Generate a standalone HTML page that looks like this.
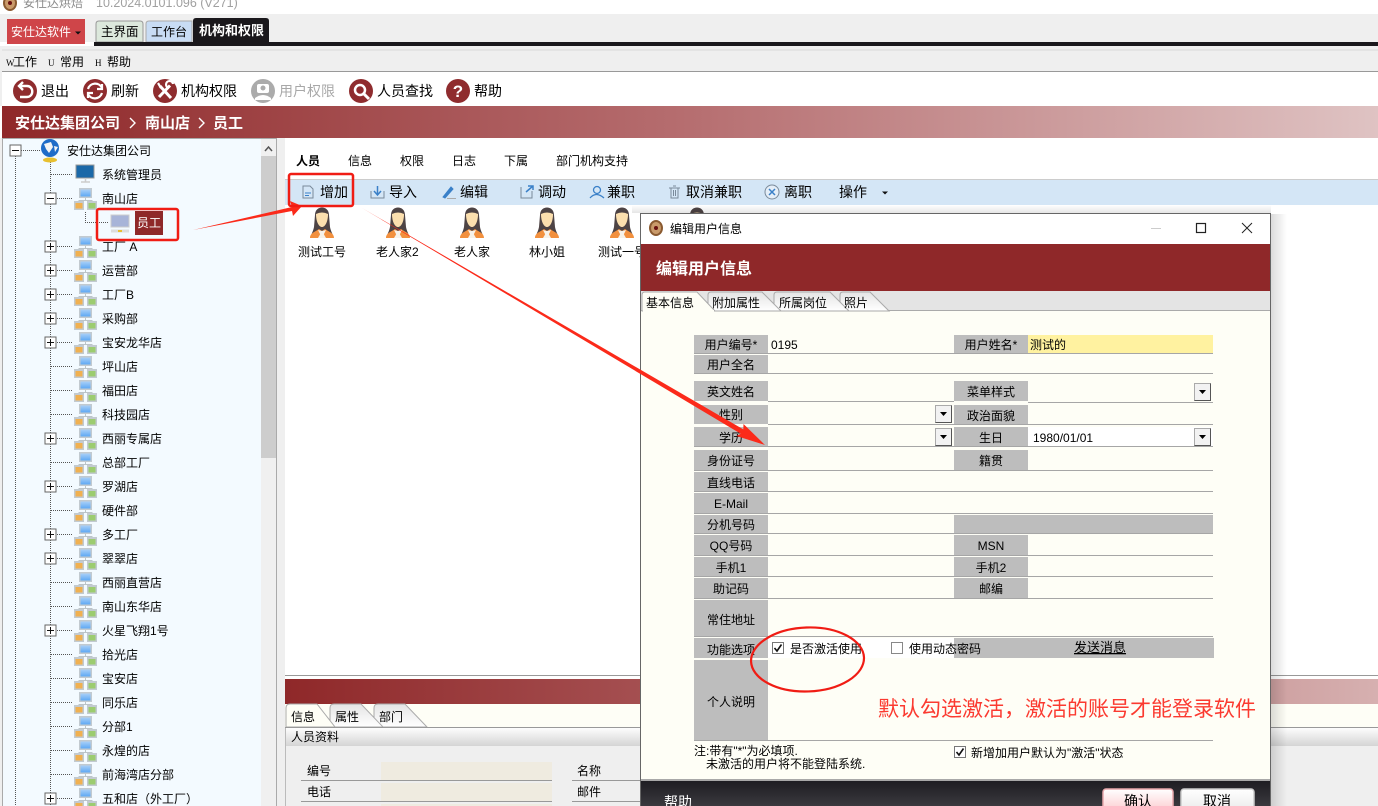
<!DOCTYPE html>
<html><head><meta charset="utf-8"><style>
html,body{margin:0;padding:0;width:1378px;height:806px;overflow:hidden;background:#fff}
svg{display:block}
text{font-family:"Liberation Sans","Noto Sans CJK SC",sans-serif;font-size:12px;fill:#000}
.t14 text,text.t14{font-size:14px}
.l text,text.l{text-anchor:middle}
</style></head><body>
<svg xmlns="http://www.w3.org/2000/svg" width="1378" height="806" viewBox="0 0 1378 806">
<defs>
<linearGradient id="rb"><stop offset="0" stop-color="#8f2829"/><stop offset=".5" stop-color="#b66e70"/><stop offset="1" stop-color="#dfc3c3"/></linearGradient>
<linearGradient id="rb2"><stop offset="0" stop-color="#8f2829"/><stop offset=".5" stop-color="#b06466"/><stop offset="1" stop-color="#d6b0b0"/></linearGradient>
<linearGradient id="bar" x2="0" y2="1"><stop offset="0" stop-color="#fdfdfd"/><stop offset="1" stop-color="#d4d4d4"/></linearGradient>
<linearGradient id="tabg" x2="0" y2="1"><stop offset="0" stop-color="#e4e4e4"/><stop offset="1" stop-color="#fff"/></linearGradient>
<linearGradient id="ok" x2="0" y2="1"><stop offset="0" stop-color="#fff"/><stop offset="1" stop-color="#fcc8cc"/></linearGradient>
<linearGradient id="no" x2="0" y2="1"><stop offset="0" stop-color="#fff"/><stop offset="1" stop-color="#e8e8e8"/></linearGradient>
<linearGradient id="foot" x2="0" y2="1"><stop offset="0" stop-color="#1e1d22"/><stop offset="1" stop-color="#3a393e"/></linearGradient>
<linearGradient id="shad"><stop offset="0" stop-color="#000" stop-opacity=".14"/><stop offset="1" stop-color="#000" stop-opacity="0"/></linearGradient>
<linearGradient id="shadt" x2="0" y2="1"><stop offset="0" stop-color="#000" stop-opacity="0"/><stop offset="1" stop-color="#000" stop-opacity=".1"/></linearGradient>
<linearGradient id="sky" x2="0" y2="1"><stop offset="0" stop-color="#a8d0f8"/><stop offset="1" stop-color="#5ea8f4"/></linearGradient>
<g id="org">
<rect x="-6" y="-10" width="13" height="10" fill="#c2cad0"/>
<rect x="-4.500" y="-8.500" width="10" height="7" fill="url(#sky)"/>
<path d="M.5 0V3M-6 4V2.500H7V4" fill="none" stroke="#bcc4c8"/>
<rect x="-11" y="3" width="10" height="9" fill="#c2cad0"/>
<rect x="-9.500" y="5" width="7" height="5.500" fill="#f0b050"/>
<rect x="2" y="3" width="10" height="9" fill="#c2cad0"/>
<rect x="3.500" y="5" width="7" height="5.500" fill="#9ccc70"/>
</g>
<g id="plus"><rect x="-5.5" y="-5.5" width="11" height="11" fill="#fff" stroke="#666"/><path d="M-3.5 0H3.5M0-3.5V3.5" stroke="#111"/></g>
<g id="minus"><rect x="-5.5" y="-5.5" width="11" height="11" fill="#fff" stroke="#666"/><path d="M-3.5 0H3.5" stroke="#111"/></g>
<g id="p">
<path d="M-7-7C-7-17 7-17 7-7L8 5C9 10 11 12 11 15H-11C-11 12-9 10-8 5Z" fill="#4d4344"/>
<path d="M-6-8Q0-11 6-8C6 0 3 5 0 5S-6 0-6-8Z" fill="#fbdfae"/>
<path d="M-12 16C-12 11-7 10-3 7L0 9L3 7C7 10 12 11 12 16Z" fill="#f2903e"/>
<path d="M-4 8L0 16L4 8L0 9Z" fill="#f6f2ea"/>
<path d="M-4 16H4L0 9Z" fill="#f6f2ea"/>
</g>
<g id="dd"><rect x="0" y="0" width="16" height="17" fill="#f2f2f2" stroke="#aaa"/><path d="M16 0V17H0" fill="none" stroke="#555"/><path d="M4.5 6.500H11.500L8 10.500Z" fill="#000"/></g>
<g id="cb"><rect x=".5" y=".5" width="11" height="11" fill="#fff" stroke="#777"/><path d="M2.500 6L5 9L9.500 2.500" fill="none" stroke="#111" stroke-width="1.600"/></g>
<g id="donut"><ellipse cx="0" cy="0" rx="7" ry="8" fill="#8a5a30"/><ellipse cx="0" cy="0" rx="5" ry="6" fill="#c99a6a"/><circle r="2" fill="#6a1010"/></g>
</defs>

<!-- title -->
<rect width="1378" height="14" fill="#fff"/>
<use href="#donut" x="10" y="3"/>
<text x="23" y="7" style="fill:#8a8a8a">安仕达烘焙</text>
<text x="96" y="7" style="fill:#a0a0a0;font-size:12.500px">10.2024.0101.096 (V271)</text>

<!-- tab band -->
<rect y="14" width="1378" height="28" fill="#efefef"/>
<rect x="7" y="19" width="78" height="25" fill="#cf4549"/>
<text x="11" y="36" style="fill:#fff;font-size:12px">安仕达软件</text>
<path d="M75 31.500H81L78 34.500Z" fill="#111"/>
<path d="M96 42V24Q96 21 99 21H140Q143 21 143 24V42Z" fill="#dce8dc" stroke="#999"/>
<path d="M146 42V24Q146 21 149 21H192V42Z" fill="#c8dcf4" stroke="#aaa"/>
<path d="M193 42V21Q193 18 196 18H266Q269 18 269 21V42Z" fill="#1a181c"/>
<text x="101" y="36" style="font-size:12.500px">主界面</text>
<text x="151" y="36" style="font-size:12px">工作台</text>
<text x="199" y="35" style="fill:#fff;font-size:13px;font-weight:700">机构和权限</text>
<rect x="94" y="42" width="1284" height="4" fill="#1a181c"/>
<rect y="46" width="1378" height="3" fill="#efefef"/>
<rect y="49" width="1378" height="2" fill="#e4e4e4"/>

<!-- menu -->
<rect y="51" width="1378" height="20" fill="#efefef"/>
<rect y="71" width="1378" height="1" fill="#999"/>
<rect y="49" width="2" height="57" fill="#efefef"/>
<text x="6" y="66" style="font-family:'Liberation Serif',serif;font-size:9px">W</text><text x="13" y="66">工作</text>
<text x="48" y="66" style="font-family:'Liberation Serif',serif;font-size:9px">U</text><text x="60" y="66">常用</text>
<text x="95" y="66" style="font-family:'Liberation Serif',serif;font-size:9px">H</text><text x="107" y="66">帮助</text>

<!-- toolbar -->
<g fill="#8f2c2e">
<circle cx="25" cy="91" r="12"/><circle cx="95" cy="91" r="12"/><circle cx="165" cy="91" r="12"/><circle cx="361" cy="91" r="12"/><circle cx="458" cy="91" r="12"/>
</g>
<circle cx="263" cy="91" r="12" fill="#ababab"/>
<path d="M20 86H27C34 86 34 97 27 97H20M23 82L19 86L23 90" fill="none" stroke="#fff" stroke-width="2.400"/>
<path d="M88 89A7.500 7.500 0 0 1 102 88M102 93A7.500 7.500 0 0 1 88 94M102 84V89H97M88 98V93H93" fill="none" stroke="#fff" stroke-width="2.200"/>
<path d="M160 86L171 98M170 85.500L159 97" stroke="#fff" stroke-width="3"/><path d="M158 83L161 88M169 88A3.500 3.500 0 1 1 173 84" fill="none" stroke="#fff" stroke-width="2.200"/>
<rect x="257" y="84" width="12" height="9" rx="2" fill="#fff"/><circle cx="263" cy="88" r="2.500" fill="#ababab"/><path d="M255 98Q263 92 271 98V100H255Z" fill="#fff"/>
<circle cx="360" cy="90" r="5" fill="none" stroke="#fff" stroke-width="2.500"/><path d="M364 94L369 99" stroke="#fff" stroke-width="3"/>
<text x="458" y="97" text-anchor="middle" style="fill:#fff;font-size:17px;font-weight:700">?</text>
<g class="t14">
<text x="41" y="96">退出</text><text x="111" y="96">刷新</text><text x="181" y="96">机构权限</text>
<text x="279" y="96" style="fill:#a8a8a8">用户权限</text><text x="377" y="96">人员查找</text><text x="474" y="96">帮助</text>
</g>

<!-- breadcrumb -->
<rect x="2" y="106" width="1376" height="32" fill="url(#rb)"/>
<text x="15" y="128" style="fill:#fff;font-size:15px;font-weight:700">安仕达集团公司</text>
<path d="M130 118L135 123L130 128M199 118L204 123L199 128" fill="none" stroke="#fff" stroke-width="1.400"/>
<text x="145" y="128" style="fill:#fff;font-size:15px;font-weight:700">南山店</text>
<text x="213" y="128" style="fill:#fff;font-size:15px;font-weight:700">员工</text>

<!-- tree -->
<rect y="138" width="285" height="668" fill="#efefef"/>
<rect x="3" y="139" width="258" height="667" fill="#f3faff"/>
<rect x="2" y="138" width="275" height="1" fill="#aaa"/><rect x="2" y="138" width="1" height="668" fill="#aaa"/><rect x="276" y="138" width="1" height="668" fill="#aaa"/>
<rect x="261" y="139" width="15" height="667" fill="#f0f0f0"/>
<rect x="261" y="156" width="15" height="302" fill="#cdcdcd"/>
<path d="M265 151L268.500 147L272 151" fill="none" stroke="#555" stroke-width="1.500"/>
<g stroke="#555" stroke-dasharray="1 1" fill="none">
<path d="M15.500 156V806M50.500 160V806M21 150.500H40"/>
<path d="M51 174.500H73M57 198.500H72M57 246.500H72M57 270.500H72M57 294.500H72M57 318.500H72M57 342.500H72M51 366.500H72M51 390.500H72M51 414.500H72M57 438.500H72M51 462.500H72M57 486.500H72M51 510.500H72M57 534.500H72M57 558.500H72M51 582.500H72M51 606.500H72M57 630.500H72M51 654.500H72M51 678.500H72M51 702.500H72M51 726.500H72M51 750.500H72M51 774.500H72M57 798.500H72"/>
<path d="M85.500 212V222.500H108"/>
</g>
<use href="#minus" x="15.500" y="150.500"/>
<use href="#minus" x="50.500" y="198.500"/>
<use href="#plus" x="50.500" y="246.500"/><use href="#plus" x="50.500" y="270.500"/><use href="#plus" x="50.500" y="294.500"/><use href="#plus" x="50.500" y="318.500"/><use href="#plus" x="50.500" y="342.500"/><use href="#plus" x="50.500" y="438.500"/><use href="#plus" x="50.500" y="486.500"/><use href="#plus" x="50.500" y="534.500"/><use href="#plus" x="50.500" y="558.500"/><use href="#plus" x="50.500" y="630.500"/><use href="#plus" x="50.500" y="798.500"/>
<circle cx="50" cy="148" r="9" fill="#1f6cc8"/><path d="M44 144L51 142L53 147L49 153L46 149ZM54 146L58 147L55 152Z" fill="#f4f4f4"/><ellipse cx="50" cy="160" rx="7" ry="2.500" fill="#e8c030"/>
<rect x="76" y="165" width="18" height="13" fill="#1a68a8" stroke="#999"/><path d="M81 182H90M85.500 178V182" stroke="#ccc" stroke-width="1.500"/>
<use href="#org" x="85" y="198"/><use href="#org" x="85" y="246"/><use href="#org" x="85" y="270"/><use href="#org" x="85" y="294"/><use href="#org" x="85" y="318"/><use href="#org" x="85" y="342"/><use href="#org" x="85" y="366"/><use href="#org" x="85" y="390"/><use href="#org" x="85" y="414"/><use href="#org" x="85" y="438"/><use href="#org" x="85" y="462"/><use href="#org" x="85" y="486"/><use href="#org" x="85" y="510"/><use href="#org" x="85" y="534"/><use href="#org" x="85" y="558"/><use href="#org" x="85" y="582"/><use href="#org" x="85" y="606"/><use href="#org" x="85" y="630"/><use href="#org" x="85" y="654"/><use href="#org" x="85" y="678"/><use href="#org" x="85" y="702"/><use href="#org" x="85" y="726"/><use href="#org" x="85" y="750"/><use href="#org" x="85" y="774"/><use href="#org" x="85" y="798"/>
<rect x="111" y="215" width="18" height="12" fill="#a8b4d8" stroke="#ccc"/><path d="M111 231H129" stroke="#ddd" stroke-width="3"/><rect x="118" y="230" width="4" height="2" fill="#e8c030"/>
<rect x="135" y="211" width="28" height="24" fill="#8f2829"/>
<text x="137" y="227" style="fill:#fff;font-size:12px">员工</text>
<g>
<text x="67" y="155">安仕达集团公司</text><text x="102" y="179">系统管理员</text><text x="102" y="203">南山店</text>
<text x="102" y="251">工厂 A</text><text x="102" y="275">运营部</text><text x="102" y="299">工厂B</text><text x="102" y="323">采购部</text><text x="102" y="347">宝安龙华店</text><text x="102" y="371">坪山店</text><text x="102" y="395">福田店</text><text x="102" y="419">科技园店</text><text x="102" y="443">西丽专属店</text><text x="102" y="467">总部工厂</text><text x="102" y="491">罗湖店</text><text x="102" y="515">硬件部</text><text x="102" y="539">多工厂</text><text x="102" y="563">翠翠店</text><text x="102" y="587">西丽直营店</text><text x="102" y="611">南山东华店</text><text x="102" y="635">火星飞翔1号</text><text x="102" y="659">拾光店</text><text x="102" y="683">宝安店</text><text x="102" y="707">同乐店</text><text x="102" y="731">分部1</text><text x="102" y="755">永煌的店</text><text x="102" y="779">前海湾店分部</text><text x="102" y="803">五和店（外工厂）</text>
</g>

<!-- right content -->
<rect x="285" y="138" width="1093" height="537" fill="#fff"/>
<text x="296" y="165" style="font-weight:700">人员</text><text x="348" y="165">信息</text><text x="400" y="165">权限</text><text x="452" y="165">日志</text><text x="504" y="165">下属</text><text x="556" y="165">部门机构支持</text>
<rect x="285" y="179" width="1093" height="1" fill="#ccc"/>
<rect x="285" y="180" width="1093" height="25" fill="#d4e6f6"/>
<g fill="none" stroke="#7a8a9a">
<path d="M303 186H310L313 189V198H303Z"/><path d="M305 193H311M305 195.500H309" stroke="#3a80c8"/>
<path d="M371 191V198H384V191"/><path d="M377.500 186V194M374 191L377.500 195L381 191" stroke="#3a80c8" stroke-width="1.500"/>
<path d="M443 197L451 187L453 189L445 198Z" fill="#3a80c8" stroke="#3a80c8"/><path d="M447 198.500H456" stroke="#aaa"/>
<path d="M521 187V198H532V191"/><path d="M526 192L533 186M528 186H533V190" stroke="#3a80c8" stroke-width="1.500"/>
<circle cx="597" cy="190" r="3.500" stroke="#3a80c8" stroke-width="1.300"/><path d="M590 198Q596 191 604 198" stroke="#3a80c8" stroke-width="1.300"/>
<path d="M669 188H680M671 188V198H678V188M673 186H676M673.500 190V196M675.500 190V196"/>
<circle cx="772" cy="192" r="7" fill="#e4eef8"/><path d="M769 189L775 195M775 189L769 195" stroke="#3a80c8" stroke-width="1.500"/>
</g>
<g class="t14">
<text x="320" y="197">增加</text><text x="389" y="197">导入</text><text x="460" y="197">编辑</text><text x="538" y="197">调动</text><text x="607" y="197">兼职</text><text x="686" y="197">取消兼职</text><text x="784" y="197">离职</text><text x="839" y="197">操作</text>
</g>
<path d="M882 191.500H888L885 194.500Z" fill="#111"/>
<use href="#p" x="322" y="222"/><use href="#p" x="398" y="222"/><use href="#p" x="472" y="222"/><use href="#p" x="547" y="222"/><use href="#p" x="622" y="222"/><use href="#p" x="697" y="222"/>
<text x="298" y="256">测试工号</text><text x="376" y="256">老人家2</text><text x="454" y="256">老人家</text><text x="529" y="256">林小姐</text><text x="598" y="256">测试一号</text>

<!-- bottom panel -->
<rect x="285" y="675" width="1093" height="1" fill="#999"/>
<rect x="285" y="676" width="1093" height="3" fill="#fff"/>
<rect x="285" y="679" width="1093" height="25" fill="url(#rb2)"/>
<rect x="285" y="704" width="1093" height="23" fill="#fefef6"/>
<path d="M374 727V708Q374 704 378 704H405L427 727H388Z" fill="url(#tabg)" stroke="#aaa"/>
<path d="M330 727V708Q330 704 334 704H361L383 727H344Z" fill="url(#tabg)" stroke="#aaa"/>
<path d="M286 727V708Q286 704 290 704H317L335 727Z" fill="#fefef6" stroke="#aaa"/>
<text x="291" y="721">信息</text><text x="335" y="721">属性</text><text x="379" y="721">部门</text>
<rect x="285" y="727" width="1093" height="1" fill="#999"/>
<rect x="286" y="728" width="1092" height="18" fill="url(#bar)"/>
<rect x="286" y="746" width="1092" height="60" fill="#efefef"/>
<rect x="285" y="728" width="1" height="78" fill="#bbb"/>
<text x="291" y="741">人员资料</text>
<rect x="381" y="762" width="171" height="18" fill="#efebe0"/><rect x="381" y="783" width="171" height="18" fill="#efebe0"/><rect x="381" y="804" width="171" height="2" fill="#efebe0"/>
<rect x="301" y="780" width="251" height="1" fill="#999"/><rect x="301" y="801" width="251" height="1" fill="#999"/>
<rect x="572" y="780" width="69" height="1" fill="#999"/><rect x="572" y="801" width="69" height="1" fill="#999"/>
<text x="307" y="775">编号</text><text x="307" y="796">电话</text><text x="577" y="775">名称</text><text x="577" y="796">邮件</text>

<!-- first arrow + red boxes -->
<path d="M193 230L292 207L290 201L302 206L293 216L292 211Z" fill="#fb2a1a"/>
<rect x="97" y="209" width="81" height="31" rx="2" fill="none" stroke="#f01c14" stroke-width="2.500"/>
<rect x="289" y="174" width="64" height="32" rx="2" fill="none" stroke="#f01c14" stroke-width="2.500"/>

<!-- dialog -->
<rect x="1271" y="214" width="16" height="592" fill="url(#shad)"/>
<rect x="632" y="205" width="639" height="8" fill="url(#shadt)"/>
<rect x="640.500" y="213.500" width="630" height="600" fill="#fff" stroke="#666"/>
<use href="#donut" x="656" y="228"/>
<text x="670" y="233">编辑用户信息</text>
<path d="M1151 228.500H1161" stroke="#ccc"/>
<rect x="1196.500" y="223.500" width="9" height="9" fill="none" stroke="#222" stroke-width="1.200"/>
<path d="M1242 223L1252 233M1252 223L1242 233" stroke="#222"/>
<rect x="641" y="244" width="629" height="47" fill="#8f2829"/>
<text x="656" y="274" style="fill:#fff;font-size:16px;font-weight:700">编辑用户信息</text>
<rect x="641" y="291" width="629" height="20" fill="#e4e4e4"/>
<rect x="641" y="311" width="629" height="469" fill="#fefef6"/>
<rect x="641" y="310" width="629" height="1" fill="#aaa"/>
<path d="M840 311V295Q840 292 843 292H870L889 311Z" fill="url(#tabg)" stroke="#aaa"/>
<path d="M774 311V295Q774 292 777 292H830L849 311Z" fill="url(#tabg)" stroke="#aaa"/>
<path d="M708 311V295Q708 292 711 292H762L781 311Z" fill="url(#tabg)" stroke="#aaa"/>
<path d="M642 311V295Q642 292 645 292H697L715 311Z" fill="#fefef6" stroke="#aaa"/>
<rect x="643" y="310" width="71" height="2" fill="#fefef6"/>
<text x="646" y="307">基本信息</text><text x="712" y="307">附加属性</text><text x="779" y="307">所属岗位</text><text x="844" y="307">照片</text>

<!-- form -->
<g fill="#bdbdbd">
<rect x="694" y="335" width="74" height="18"/><rect x="954" y="335" width="74" height="18"/>
<rect x="694" y="355" width="74" height="18"/>
<rect x="694" y="381" width="74" height="20"/><rect x="954" y="381" width="74" height="20"/>
<rect x="694" y="405" width="74" height="19"/><rect x="954" y="405" width="74" height="19"/>
<rect x="694" y="427" width="74" height="19"/><rect x="954" y="427" width="74" height="19"/>
<rect x="694" y="450" width="74" height="20"/><rect x="954" y="450" width="74" height="20"/>
<rect x="694" y="472" width="74" height="19"/>
<rect x="694" y="493" width="74" height="20"/>
<rect x="694" y="515" width="74" height="18"/><rect x="954" y="515" width="259" height="18"/>
<rect x="694" y="535" width="74" height="20"/><rect x="954" y="535" width="74" height="20"/>
<rect x="694" y="557" width="74" height="19"/><rect x="954" y="557" width="74" height="19"/>
<rect x="694" y="578" width="74" height="20"/><rect x="954" y="578" width="74" height="20"/>
<rect x="694" y="600" width="74" height="36"/>
<rect x="694" y="638" width="74" height="20"/>
<rect x="694" y="660" width="74" height="80"/>
</g>
<rect x="1028" y="335" width="185" height="18" fill="#fff2a0"/>
<rect x="1028" y="427" width="185" height="19" fill="#fff"/>
<rect x="768" y="638" width="186" height="20" fill="#fff"/>
<rect x="954" y="638" width="260" height="20" fill="#bdbdbd"/>
<g fill="#a6a6a6">
<rect x="694" y="353" width="519" height="1"/><rect x="694" y="373" width="519" height="1"/><rect x="768" y="401" width="186" height="1"/><rect x="1028" y="402" width="185" height="1"/>
<rect x="768" y="424" width="445" height="1"/><rect x="694" y="446" width="519" height="1"/><rect x="694" y="470" width="519" height="1"/><rect x="694" y="491" width="519" height="1"/><rect x="694" y="513" width="519" height="1"/><rect x="694" y="533" width="519" height="1"/><rect x="694" y="555" width="519" height="1"/><rect x="694" y="576" width="519" height="1"/><rect x="694" y="598" width="519" height="1"/><rect x="694" y="636" width="519" height="1"/><rect x="694" y="740" width="519" height="1"/>
</g>
<g class="l">
<text x="731" y="349">用户编号*</text><text x="991" y="349">用户姓名*</text>
<text x="731" y="369">用户全名</text>
<text x="731" y="396">英文姓名</text><text x="991" y="396">菜单样式</text>
<text x="731" y="419">性别</text><text x="991" y="420">政治面貌</text>
<text x="731" y="442">学历</text><text x="991" y="442">生日</text>
<text x="731" y="465">身份证号</text><text x="991" y="465">籍贯</text>
<text x="731" y="487">直线电话</text>
<text x="731" y="508">E-Mail</text>
<text x="731" y="529">分机号码</text>
<text x="731" y="550">QQ号码</text><text x="991" y="550">MSN</text>
<text x="731" y="572">手机1</text><text x="991" y="572">手机2</text>
<text x="731" y="593">助记码</text><text x="991" y="593">邮编</text>
<text x="731" y="624">常住地址</text>
<text x="731" y="654">功能选项</text>
<text x="731" y="706">个人说明</text>
</g>
<text x="771" y="349">0195</text><text x="1030" y="349">测试的</text><text x="1033" y="442">1980/01/01</text>
<use href="#dd" x="935.500" y="405.500"/><use href="#dd" x="935.500" y="428.500"/><use href="#dd" x="1194.500" y="383.500"/><use href="#dd" x="1194.500" y="428.500"/>
<use href="#cb" x="772" y="642"/>
<text x="790" y="653">是否激活使用</text>
<rect x="891.500" y="642.500" width="11" height="11" fill="#fff" stroke="#888"/>
<text x="909" y="653">使用动态密码</text>
<text x="1074" y="652" style="font-size:13px;text-decoration:underline">发送消息</text>
<text x="694" y="755">注:带有"*"为必填项.</text>
<text x="706" y="768">未激活的用户将不能登陆系统.</text>
<use href="#cb" x="954" y="746"/>
<text x="971" y="757">新增加用户默认为"激活"状态</text>
<ellipse cx="807.500" cy="659.500" rx="56.500" ry="32" fill="none" stroke="#f01c14" stroke-width="2.200" transform="rotate(-2 807 659)"/>
<text x="878" y="716" style="fill:#fb3a30;font-size:21px">默认勾选激活，激活的账号才能登录软件</text>

<!-- second arrow, above the dialog -->
<path d="M362 208L743.300 429.400L743.500 424L765 445L736.500 436L740.700 433.700Z" fill="#fb2a1a"/>

<!-- footer -->
<rect x="641" y="779" width="629" height="2" fill="#a8a8a8"/>
<rect x="641" y="781" width="629" height="25" fill="url(#foot)"/>
<text x="664" y="807" style="fill:#fff;font-size:14px">帮助</text>
<rect x="1103" y="789" width="70" height="24" rx="3" fill="url(#ok)" stroke="#e8a8ac" stroke-width="1.500"/>
<rect x="1181" y="789" width="73" height="24" rx="3" fill="url(#no)" stroke="#ccc" stroke-width="1.500"/>
<text x="1138" y="806" text-anchor="middle" style="font-size:14px">确认</text>
<text x="1217" y="806" text-anchor="middle" style="font-size:14px">取消</text>
<rect x="1270" y="214" width="1" height="592" fill="#666"/>
</svg>
</body></html>
